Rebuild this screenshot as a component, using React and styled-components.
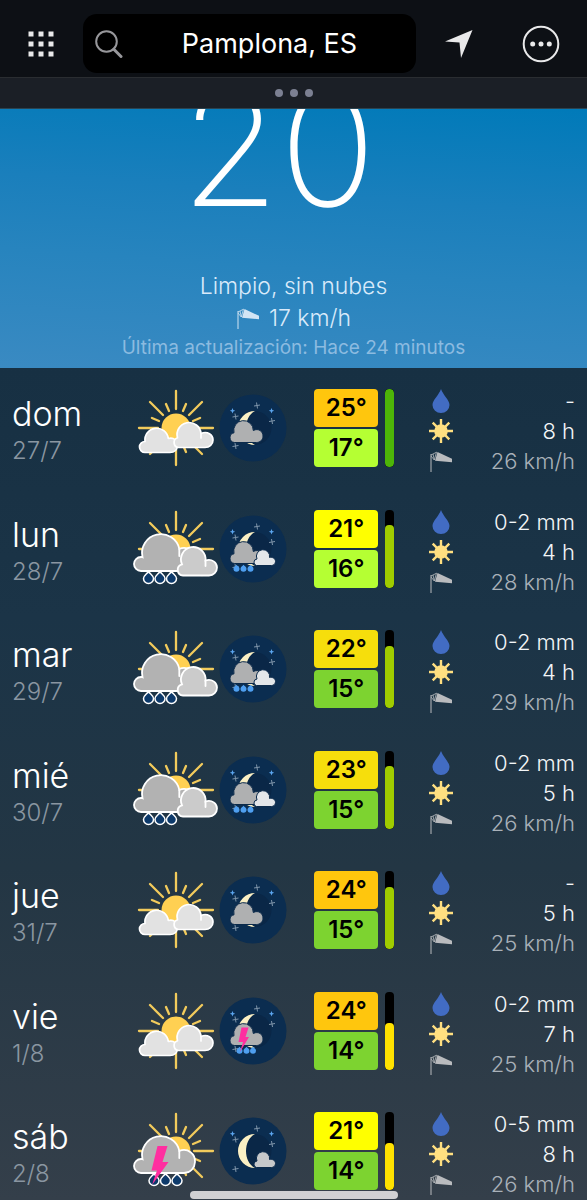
import React from "react";
import styled, { createGlobalStyle } from "styled-components";

const GlobalStyle = createGlobalStyle`
  * { box-sizing: border-box; }
  body {
    margin: 0;
    background: #0d1015;
    color: #fff;
    font-family: Inter, "Liberation Sans", sans-serif;
  }
`;

const Page = styled.div`
  min-height: 100vh;
  display: flex;
  flex-direction: column;
`;

const Header = styled.header`
  display: flex;
  align-items: center;
  padding: 14px 24px 4px 19px;
  background: #0d1015;
  border-bottom: 1px solid #2a2d31;
`;

const IconButton = styled.button`
  flex: none;
  width: 44px;
  height: 44px;
  margin-left: ${(p) => p.$gap || 0}px;
  padding: 0;
  border: 0;
  background: none;
  color: #e9e9ea;
  display: grid;
  place-items: center;
`;

const SearchBox = styled.label`
  flex: 1;
  min-width: 0;
  height: 59px;
  margin-left: 20px;
  padding-left: 12px;
  display: flex;
  align-items: center;
  border-radius: 14px;
  background: #000;
`;

const SearchInput = styled.input`
  flex: 1;
  min-width: 0;
  height: 100%;
  padding: 0;
  border: 0;
  outline: 0;
  background: none;
  color: #fff;
  font: 400 27px Inter, "Liberation Sans", sans-serif;
  text-align: center;
`;

const HandleBar = styled.button`
  height: 31px;
  padding: 0;
  border: 0;
  border-bottom: 1px solid #2b4350;
  background: #1b1f26;
  display: flex;
  align-items: center;
  justify-content: center;
  gap: 7px;
`;

const HandleDot = styled.span`
  width: 8px;
  height: 8px;
  border-radius: 50%;
  background: #7c8092;
`;

const Hero = styled.section`
  overflow: hidden;
  padding-bottom: 6px;
  background: linear-gradient(184deg, #007ab9 0%, #1a7fbc 35%, #2784be 60%, #3a8ac2 100%);
  text-align: center;
`;

const Temperature = styled.div`
  margin: -16px 30px 67px 0;
  font-size: 160px;
  line-height: 110px;
  font-weight: 200;
`;

const HeroLine = styled.p`
  margin: 0;
  display: flex;
  align-items: center;
  justify-content: center;
  gap: 9px;
  font-size: ${(p) => (p.$small ? 19 : 23)}px;
  line-height: ${(p) => (p.$small ? 28 : 32)}px;
  font-weight: ${(p) => (p.$small ? 400 : 300)};
  color: ${(p) => (p.$small ? "#8cbbe0" : "#d9eafa")};
`;

const Forecast = styled.ul`
  flex: 1;
  margin: 0;
  padding: 18px 0 1px;
  list-style: none;
  display: flex;
  flex-direction: column;
  justify-content: space-between;
  gap: 16px;
  background: linear-gradient(180deg, #173043 0%, #1b3447 30%, #233644 60%, #343f4a 100%);
`;

const Day = styled.li`
  height: 90px;
  padding: 3px 12px 0;
  display: flex;
  align-items: flex-start;
`;

const DayLabel = styled.div`
  width: 21%;
`;

const DayName = styled.div`
  font-size: 34px;
  line-height: 46px;
  margin-top: 2px;
  font-weight: 300;
`;

const DayDate = styled.div`
  font-size: 24px;
  line-height: 28px;
  font-weight: 300;
  color: #8a96a1;
`;

const Skies = styled.div`
  flex: none;
  display: flex;
  gap: 1px;
  margin-right: 27px;
`;

const Temps = styled.div`
  flex: none;
  display: grid;
  gap: 2px;
  margin-right: 7px;
`;

const Chip = styled.span`
  width: 64px;
  height: 38px;
  border-radius: 4px;
  background: ${(p) => p.$color};
  color: #000;
  font-size: 24px;
  line-height: 38px;
  font-weight: 600;
  text-align: center;
`;

const Gauge = styled.div`
  flex: none;
  width: 9px;
  height: 78px;
  margin-right: 35px;
  border-radius: 4px;
  overflow: hidden;
  background: #000;
  display: flex;
  align-items: flex-end;
`;

const GaugeFill = styled.div`
  width: 100%;
  height: ${(p) => p.$level}%;
  border-radius: 4px;
  background: ${(p) => p.$color};
`;

const Details = styled.div`
  flex: 1;
  margin-top: -3px;
`;

const Detail = styled.div`
  display: flex;
  align-items: center;
  justify-content: space-between;
  height: 30px;
  font-size: 22px;
  line-height: 30px;
  font-weight: 300;
  white-space: nowrap;
  color: ${(p) => (p.$dim ? "#a9b1b9" : "#f3f6f8")};
`;

const HomeIndicator = styled.div`
  position: fixed;
  left: 50%;
  bottom: 1px;
  width: 208px;
  height: 8px;
  margin-left: -104px;
  border-radius: 4px;
  background: #d0d1d3;
`;

const RAYS = [
  [-26, -26, -13, -13],
  [26, -26, 13, -13],
  [0, -37, 0, -19],
  [-10, -24, -7, -17],
  [10, -24, 7, -17],
  [-24, -10, -17, -7],
  [24, -10, 17, -7],
  [-37, 0, -18, 0],
  [37, 0, 18, 0],
  [24, 10, 17, 7],
  [26, 26, 13, 13],
  [10, 24, 7, 17],
];
const LOW_RAYS = [
  [0, 37, 0, 19],
  [-26, 26, -13, 13],
];

function Sun({ full }) {
  const rays = full ? [...RAYS, ...LOW_RAYS] : RAYS;
  return (
    <g transform="translate(46 39)">
      <g stroke="#f2cb5c" strokeWidth="2.3" strokeLinecap="round">
        {rays.map(([x1, y1, x2, y2], i) => (
          <line key={i} x1={x1} y1={y1} x2={x2} y2={y2} />
        ))}
      </g>
      <circle r="14.5" fill="#ffd052" />
    </g>
  );
}

function DayDrops({ xs }) {
  return xs.map((x) => (
    <path
      key={x}
      transform={`translate(${x} 68)`}
      d="M0-6.5C1.5-4 5-2.5 5 .5A5 5 0 0 1-5 .5C-5-2.5-1.5-4 0-6.5Z"
      fill="#0d3a6b"
      stroke="#fff"
      strokeWidth="1.5"
    />
  ));
}

const BIG_CLOUD = "M11 61A7 7 0 0 1 11 47C11.5 47 12 47 12.5 47.2A18.7 18.7 0 1 1 49.3 38.8C58 35.5 65.5 42 65 50C64.7 56 60.5 61 54 61Z";

function DaySky({ kind }) {
  return (
    <svg width="88" height="78" viewBox="0 0 88 78" aria-hidden="true">
      <Sun full={kind === "fair"} />
      {kind === "fair" && (
        <g fill="#e2e2e2" stroke="#fff" strokeWidth="1.7" strokeLinejoin="round" strokeLinecap="round">
          <path d="M15 63.5A5.5 5.5 0 0 1 15 52.5A11.6 11.6 0 1 1 38.3 49.5C44 48 48 52 47.5 57C47 61 44 63.5 40 63.5Z" />
          <path d="M48.5 58.5A5 5 0 0 1 47.5 48.8A12 12 0 1 1 71 44.5C77.5 41.5 83 46 83 51C83 55.5 79.5 58.5 75 58.5Z" />
          <path d="M71 44.5V49" fill="none" />
        </g>
      )}
      {kind === "rain" && (
        <>
          <DayDrops xs={[18.5, 30, 41.5]} />
          <path d={BIG_CLOUD} fill="#b2b2b2" stroke="#fff" strokeWidth="1.8" />
          <path d="M49.3 38.8V46" fill="none" stroke="#fff" strokeWidth="1.8" strokeLinecap="round" />
          <path
            d="M53 65.5A5.7 5.7 0 0 1 52 54.3A12.3 12.3 0 1 1 75.5 50.5C82 48.5 87 52.5 87 57.5C87 62 83.5 65.5 79 65.5Z"
            fill="#cbcbcb"
            stroke="#fff"
            strokeWidth="1.8"
          />
          <path d="M75.5 50.5V56" fill="none" stroke="#fff" strokeWidth="1.8" strokeLinecap="round" />
        </>
      )}
      {kind === "storm" && (
        <>
          <DayDrops xs={[24, 35.5, 47]} />
          <path d={BIG_CLOUD} fill="#b2b2b2" stroke="#fff" strokeWidth="1.8" />
          <path d="M49.3 38.8V46" fill="none" stroke="#fff" strokeWidth="1.8" strokeLinecap="round" />
          <path d="M27.5 34H37.5L32.5 50H38.5L22 73L27 58.5H21.5Z" fill="#ff2fa0" />
        </>
      )}
    </svg>
  );
}

const NIGHT_CLOUD = "M15.5 53.5A4.9 4.9 0 0 1 15 43.8A9.8 9.8 0 1 1 34.3 41.5C39.5 38.8 44 42.5 44 47C44 51 41 53.5 37.5 53.5Z";
const SMALL_CLOUD = "M37.5 55.5A3.3 3.3 0 0 1 38 49A6.6 6.6 0 1 1 50.5 47.5C53.5 46.8 56.5 48.5 56.5 51.5C56.5 54 54.5 55.5 52.5 55.5Z";

function NightSky({ kind }) {
  return (
    <svg width="68" height="78" viewBox="0 0 68 78" aria-hidden="true">
      <circle cx="34" cy="39" r="33.5" fill="#0b2d50" />
      <circle cx="35.5" cy="39" r="17" fill="#0a2747" />
      <path d="M36 22A17 17 0 0 0 36 56C24 50 24 28 36 22Z" fill="#fbf0c4" />
      <g stroke="#7f95aa" strokeWidth="1">
        {[[38, 16.5], [16.5, 27.5], [53, 32], [16.5, 57]].map(([x, y]) => (
          <path key={x + "-" + y} d={`M${x - 3} ${y + 0.5}L${x + 3} ${y - 0.5}M${x - 0.5} ${y - 3}L${x + 0.5} ${y + 3}`} />
        ))}
      </g>
      <g fill="#5ba5ee">
        {[13.5, 52.5].map((x) => (
          <path key={x} d={`M${x} 19l.8 1.9 1.9.8-1.9.8-.8 1.9-.8-1.9-1.9-.8 1.9-.8Z`} />
        ))}
      </g>
      {kind !== "clear" && <path d={NIGHT_CLOUD} fill="#afb0b1" stroke="#0b2a4b" strokeWidth="1" />}
      {(kind === "rain" || kind === "storm") && (
        <g fill="#4f9ff0">
          {(kind === "rain" ? [17.5, 24.5, 31.5] : [20.5, 27.5, 34]).map((x) => (
            <path key={x} transform={`translate(${x} 58.5)`} d="M0-3.8C1-2.5 3-1.8 3 .2A3 3 0 0 1-3 .2C-3-1.8-1-2.5 0-3.8Z" />
          ))}
        </g>
      )}
      {kind === "storm" && <path d="M22.5 35.5H29.5L26.5 45H30L21 60L24 50H19.5Z" fill="#ff2fa0" />}
      {(kind === "rain" || kind === "clear") && (
        <path d={SMALL_CLOUD} fill={kind === "rain" ? "#e3e6e9" : "#c6c8ca"} stroke="#0b2a4b" strokeWidth="1" />
      )}
    </svg>
  );
}

function Windsock({ color }) {
  return (
    <svg width="24" height="24" viewBox="0 0 24 24" aria-hidden="true">
      <path d="M2 5V23" stroke={color} strokeWidth="1" />
      <path d="M2 6L7.500 3.200L5.300 11L2 7M4 5L5.300 11" fill="none" stroke={color} strokeWidth=".8" />
      <path d="M8.500 3L23 9.800V13.300L6 11.700Z" fill={color} />
    </svg>
  );
}

function Drop() {
  return (
    <svg width="24" height="26" viewBox="0 0 24 26" aria-hidden="true">
      <path d="M12 1C14 7 20.5 12 20.5 17A8.5 8 0 0 1 3.5 17C3.5 12 10 7 12 1Z" fill="#426cc3" />
    </svg>
  );
}

function SmallSun() {
  return (
    <svg width="24" height="24" viewBox="0 0 24 24" aria-hidden="true">
      <circle cx="12" cy="12" r="6.8" fill="#ffdf80" />
      <path
        d="M12 0V24M0 12H24M3.7 3.7L20.3 20.3M20.3 3.7L3.7 20.3"
        stroke="#ffdf80"
        strokeWidth="2.4"
      />
    </svg>
  );
}

const ORANGE = "#ffc60d";
const YELLOW = "#ffff00";
const GOLD = "#f6de0c";
const LIME = "#b5ff33";
const GREEN = "#7dd330";

const DAYS = [
  { name: "dom", date: "27/7", day: "fair", night: "cloud", hi: 25, hiC: ORANGE, lo: 17, loC: LIME, level: 100, bar: "#4db508", rain: "-", sun: "8 h", wind: "26 km/h" },
  { name: "lun", date: "28/7", day: "rain", night: "rain", hi: 21, hiC: YELLOW, lo: 16, loC: LIME, level: 80, bar: "#a0cc00", rain: "0-2 mm", sun: "4 h", wind: "28 km/h" },
  { name: "mar", date: "29/7", day: "rain", night: "rain", hi: 22, hiC: GOLD, lo: 15, loC: GREEN, level: 80, bar: "#a0cc00", rain: "0-2 mm", sun: "4 h", wind: "29 km/h" },
  { name: "mié", date: "30/7", day: "rain", night: "rain", hi: 23, hiC: GOLD, lo: 15, loC: GREEN, level: 80, bar: "#a0cc00", rain: "0-2 mm", sun: "5 h", wind: "26 km/h" },
  { name: "jue", date: "31/7", day: "fair", night: "cloud", hi: 24, hiC: ORANGE, lo: 15, loC: GREEN, level: 80, bar: "#a0cc00", rain: "-", sun: "5 h", wind: "25 km/h" },
  { name: "vie", date: "1/8", day: "fair", night: "storm", hi: 24, hiC: ORANGE, lo: 14, loC: GREEN, level: 60, bar: "#ffe100", rain: "0-2 mm", sun: "7 h", wind: "25 km/h" },
  { name: "sáb", date: "2/8", day: "storm", night: "clear", hi: 21, hiC: YELLOW, lo: 14, loC: GREEN, level: 60, bar: "#ffe100", rain: "0-5 mm", sun: "8 h", wind: "26 km/h" },
];

export default function App() {
  return (
    <Page>
      <GlobalStyle />
      <Header>
        <IconButton aria-label="Menú">
          <svg width="26" height="26" viewBox="0 0 26 26" fill="currentColor">
            {[0, 10, 20].map((y) => [0, 10, 20].map((x) => (
              <rect key={x + "-" + y} x={x + 0.5} y={y + 0.5} width="5" height="5" />
            )))}
          </svg>
        </IconButton>
        <SearchBox>
          <svg width="28" height="28" viewBox="0 0 28 28" fill="none" stroke="#97979b" aria-hidden="true">
            <circle cx="11.5" cy="11.5" r="10.3" strokeWidth="2" />
            <path d="M18.8 19.2L26 26.5" strokeWidth="3" strokeLinecap="round" />
          </svg>
          <SearchInput aria-label="Buscar lugar" defaultValue="Pamplona, ES" />
        </SearchBox>
        <IconButton $gap={21} aria-label="Mi ubicación">
          <svg width="28" height="28" viewBox="0 0 28 28" fill="currentColor">
            <path d="M27.5 0L16 28L14.5 12.5L0 11.5Z" />
          </svg>
        </IconButton>
        <IconButton $gap={38} aria-label="Más opciones">
          <svg width="38" height="38" viewBox="0 0 38 38" fill="currentColor">
            <circle cx="19" cy="19" r="17.3" fill="none" stroke="currentColor" strokeWidth="2" />
            <circle cx="10.7" cy="19" r="2.5" />
            <circle cx="19" cy="19" r="2.5" />
            <circle cx="27.3" cy="19" r="2.5" />
          </svg>
        </IconButton>
      </Header>
      <HandleBar aria-label="Desplegar panel">
        <HandleDot />
        <HandleDot />
        <HandleDot />
      </HandleBar>
      <Hero>
        <Temperature>20</Temperature>
        <HeroLine>Limpio, sin nubes</HeroLine>
        <HeroLine>
          <Windsock color="#d3e5f4" />
          17 km/h
        </HeroLine>
        <HeroLine $small>Última actualización: Hace 24 minutos</HeroLine>
      </Hero>
      <Forecast>
        {DAYS.map((d) => (
          <Day key={d.name}>
            <DayLabel>
              <DayName>{d.name}</DayName>
              <DayDate>{d.date}</DayDate>
            </DayLabel>
            <Skies>
              <DaySky kind={d.day} />
              <NightSky kind={d.night} />
            </Skies>
            <Temps>
              <Chip $color={d.hiC}>{d.hi}°</Chip>
              <Chip $color={d.loC}>{d.lo}°</Chip>
            </Temps>
            <Gauge>
              <GaugeFill $level={d.level} $color={d.bar} />
            </Gauge>
            <Details>
              <Detail><Drop />{d.rain}</Detail>
              <Detail><SmallSun />{d.sun}</Detail>
              <Detail $dim><Windsock color="#b9bbbe" />{d.wind}</Detail>
            </Details>
          </Day>
        ))}
      </Forecast>
      <HomeIndicator />
    </Page>
  );
}
